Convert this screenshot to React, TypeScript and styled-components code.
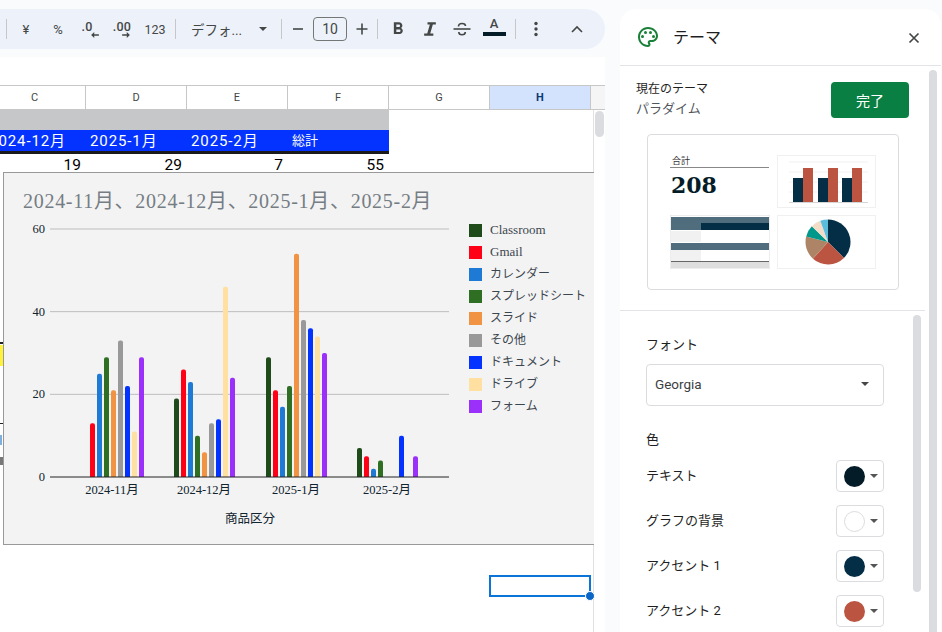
import React from "react";
import styled, { createGlobalStyle } from "styled-components";

const UI_FONT = `Roboto, "Noto Sans CJK JP", sans-serif`;
const CHART_FONT = `"Liberation Serif", "Noto Sans CJK JP", serif`;

const GlobalStyle = createGlobalStyle`
  html, body { margin: 0; padding: 0; background: #f9fbfd; overflow: hidden; }
  * { box-sizing: border-box; }
`;

const Page = styled.div`
  display: flex;
  width: 942px;
  height: 632px;
  padding-top: 9px;
  background: #f9fbfd;
  font-family: ${UI_FONT};
  overflow: hidden;
`;

const LeftSide = styled.div`
  display: flex;
  flex-direction: column;
  gap: 8px;
  width: 605px;
  flex: none;
`;

/* toolbar */
const Toolbar = styled.div`
  display: flex;
  align-items: center;
  height: 40px;
  padding-left: 6px;
  background: #edf2fa;
  border-radius: 0 20px 20px 0;
  color: #444746;
`;

const Sep = styled.div<{ $left?: number; $right?: number }>`
  width: 1px;
  height: 20px;
  flex: none;
  background: #c7c7c7;
  margin-left: ${(p) => p.$left ?? 0}px;
  margin-right: ${(p) => p.$right ?? 0}px;
`;

const ToolButton = styled.div<{ $w?: number; $size?: number }>`
  position: relative;
  display: flex;
  flex-direction: column;
  align-items: center;
  justify-content: center;
  flex: none;
  width: ${(p) => p.$w ?? 32}px;
  height: 32px;
  font-size: ${(p) => p.$size ?? 12}px;
  color: #444746;
`;

const DecimalText = styled.span<{ $nudge?: number }>`
  font-size: 12.5px;
  font-weight: 500;
  line-height: 11px;
  letter-spacing: 0.2px;
  margin-left: ${(p) => p.$nudge ?? 0}px;
`;

const Arrow = styled.svg<{ $nudge: number }>`
  display: block;
  margin-left: ${(p) => p.$nudge}px;
`;

const FontPicker = styled.div`
  display: flex;
  align-items: center;
  justify-content: space-between;
  flex: none;
  width: 100px;
  margin-left: 5px;
  padding: 0 14px 0 10px;
  font-size: 13.5px;
  color: #444746;
`;

const Caret = styled.div<{ $color?: string }>`
  width: 0;
  height: 0;
  flex: none;
  border-left: 4.5px solid transparent;
  border-right: 4.5px solid transparent;
  border-top: 4.5px solid ${(p) => p.$color ?? "#444746"};
`;

const SizeBox = styled.div`
  display: flex;
  align-items: center;
  justify-content: center;
  flex: none;
  width: 34px;
  height: 24px;
  margin: 0 3px;
  border: 1px solid #747775;
  border-radius: 4px;
  font-size: 14px;
  color: #444746;
`;

const ColorA = styled.span`
  font-size: 13px;
  font-weight: 500;
  line-height: 14px;
  margin-top: -5px;
`;

const ColorBar = styled.div`
  width: 23px;
  height: 4px;
  margin-top: 1px;
  background: #041c27;
`;

/* sheet */
const Sheet = styled.div`
  display: flex;
  flex-direction: column;
  flex: 1;
  min-height: 0;
  background: #fff;
`;

const FormulaGap = styled.div`
  height: 29px;
  flex: none;
  border-bottom: 1px solid #c7c7c7;
`;

const ColumnHeader = styled.div`
  display: grid;
  grid-template-columns: 86px repeat(5, 101px) 1fr;
  height: 24px;
  flex: none;
  border-bottom: 1px solid #c7c7c7;
`;

const ColumnCell = styled.div<{ $active?: boolean; $filler?: boolean; $cut?: number }>`
  display: flex;
  align-items: center;
  justify-content: center;
  padding-right: ${(p) => p.$cut ?? 0}px;
  font-size: 11px;
  font-weight: ${(p) => (p.$active ? 700 : 400)};
  color: ${(p) => (p.$active ? "#0b3a75" : "#444746")};
  background: ${(p) => (p.$active ? "#d3e3fd" : p.$filler ? "#f5f5f5" : "#fff")};
  border-right: 1px solid #c7c7c7;
  &:last-child { border-right: 0; }
`;

const SheetBody = styled.div`
  display: flex;
  flex: 1;
  min-height: 0;
`;

const Cells = styled.div`
  position: relative;
  width: 594px;
  flex: none;
  border-right: 1px solid #e1e1e1;
`;

const Row = styled.div<{ $bg?: string; $h: number }>`
  display: grid;
  grid-template-columns: 86px repeat(3, 101px);
  width: 389px;
  height: ${(p) => p.$h}px;
  background: ${(p) => p.$bg ?? "transparent"};
`;

const HeadRow = styled(Row)`
  border-bottom: 3px solid #1a1a1a;
  height: 24px;
  overflow: hidden;
`;

const HeadCell = styled.div<{ $clip?: boolean; $kanji?: boolean }>`
  display: flex;
  align-items: center;
  justify-content: ${(p) => (p.$clip ? "flex-end" : "flex-start")};
  padding: ${(p) => (p.$clip ? "0 20px 2px 0" : "0 0 2px 4px")};
  font-size: ${(p) => (p.$kanji ? 13 : 15)}px;
  letter-spacing: ${(p) => (p.$kanji ? 0 : 0.9)}px;
  color: #fff;
  white-space: nowrap;
  overflow: hidden;
`;

const NumCell = styled.div`
  display: flex;
  align-items: center;
  justify-content: flex-end;
  padding-right: 5px;
  font-size: 15.5px;
  color: #000;
`;

const Stub = styled.div<{ $y: number; $h: number; $c: string; $w?: number }>`
  position: absolute;
  left: 0;
  top: ${(p) => p.$y}px;
  width: ${(p) => p.$w ?? 3}px;
  height: ${(p) => p.$h}px;
  background: ${(p) => p.$c};
`;

const ChartFrame = styled.div`
  position: absolute;
  left: 3px;
  top: 62px;
  width: 591px;
  height: 373px;
  background: #f3f3f3;
  border: 1px solid #999;
  border-right: 0;
`;

const ChartSvg = styled.svg`
  display: block;
  position: absolute;
  left: -1px;
  top: -1px;
`;

const ChartTitle = styled.text`
  font-family: ${CHART_FONT};
  font-size: 20px;
  letter-spacing: 0.71px;
  fill: #757d84;
`;

const TickLabel = styled.text<{ $anchor?: string }>`
  font-family: ${CHART_FONT};
  font-size: 12.5px;
  fill: #10232e;
  text-anchor: ${(p) => p.$anchor ?? "middle"};
`;

const LegendLabel = styled.text<{ $cjk: boolean }>`
  font-family: ${CHART_FONT};
  font-size: ${(p) => (p.$cjk ? 12 : 13)}px;
  fill: #3b464e;
`;

const Selection = styled.div`
  position: absolute;
  left: 489px;
  top: 465px;
  width: 102px;
  height: 22px;
  border: 2px solid #0b74d8;
  &::after {
    content: "";
    position: absolute;
    right: -6px;
    bottom: -6px;
    width: 8px;
    height: 8px;
    border-radius: 50%;
    background: #0b66c8;
    border: 1px solid #fff;
    box-sizing: content-box;
  }
`;

const Rail = styled.div`
  flex: 1;
  padding: 1px 1px 0 1px;
`;

const RailThumb = styled.div`
  width: 9px;
  height: 26px;
  border-radius: 5px;
  background: #dadce0;
`;

/* side panel */
const Panel = styled.div`
  display: flex;
  flex-direction: column;
  width: 321px;
  margin-left: 15px;
  flex: none;
  background: #fff;
  border-radius: 16px 16px 0 0;
`;

const PanelHeader = styled.div`
  display: flex;
  align-items: center;
  height: 57px;
  flex: none;
  padding: 0 20px 0 16px;
  border-bottom: 1px solid #e1e3e6;
`;

const PanelTitle = styled.div`
  flex: 1;
  margin: -2px 0 0 13px;
  font-size: 16px;
  color: #1f1f1f;
`;

const PanelClose = styled.div`
  display: flex;
  margin-top: 2px;
`;

const PanelBody = styled.div`
  display: flex;
  flex: 1;
  min-height: 0;
`;

const PanelMain = styled.div`
  width: 305px;
  flex: none;
`;

const OuterTrack = styled.div`
  width: 8px;
  margin: 4px 0 0 4px;
  background: #dadce0;
  border-radius: 4px 4px 0 0;
`;

const ThemeSection = styled.div`
  height: 245px;
  padding: 16px 16px 0;
  border-bottom: 1px solid #e1e3e6;
`;

const ThemeTop = styled.div`
  display: flex;
  justify-content: space-between;
  height: 36px;
`;

const ThemeNames = styled.div`
  font-size: 12px;
  line-height: 19px;
  color: #1f1f1f;
  margin-top: -2px;
`;

const ThemeName = styled.div`
  font-size: 13px;
  color: #50565c;
`;

const DoneButton = styled.div`
  display: flex;
  align-items: center;
  justify-content: center;
  width: 78px;
  height: 36px;
  background: #0a7f43;
  border-radius: 4px;
  color: #fff;
  font-size: 14px;
`;

const PreviewCard = styled.div`
  display: grid;
  grid-template-columns: 99px 99px;
  grid-template-rows: 53px 54px;
  gap: 7px 8px;
  width: 252px;
  height: 156px;
  margin: 16px 0 0 11px;
  padding: 20px 0 0 22px;
  border: 1px solid #dadce0;
  border-radius: 4px;
`;

const ScoreCard = styled.div`
  display: flex;
  flex-direction: column;
`;

const ScoreLabel = styled.div`
  height: 13px;
  padding-left: 2px;
  font-size: 9px;
  line-height: 12px;
  color: #333;
  border-bottom: 1px solid #888;
`;

const ScoreValue = styled.div`
  margin-top: 4px;
  padding-left: 1px;
  font-family: "DejaVu Serif", serif;
  font-weight: 700;
  font-size: 22px;
  line-height: 26px;
  color: #041c27;
`;

const Thumb = styled.svg`
  display: block;
`;

const FormSection = styled.div`
  display: flex;
`;

const FormColumn = styled.div`
  width: 264px;
  flex: none;
  padding: 24px 0 0 26px;
`;

const FormLabel = styled.div<{ $top?: number }>`
  font-size: 13px;
  line-height: 20px;
  color: #1f1f1f;
  margin-top: ${(p) => p.$top ?? 0}px;
`;

const Select = styled.div`
  display: flex;
  align-items: center;
  justify-content: space-between;
  height: 42px;
  margin-top: 9px;
  padding: 0 14px 2px 8px;
  border: 1px solid #dadce0;
  border-radius: 4px;
  font-size: 13.5px;
  color: #3c4043;
`;

const ColorRows = styled.div`
  display: flex;
  flex-direction: column;
  gap: 13px;
  margin-top: 10px;
`;

const ColorRow = styled.div`
  display: flex;
  align-items: center;
  justify-content: space-between;
  height: 32px;
  font-size: 13px;
  color: #1f1f1f;
`;

const ColorName = styled.span`
  margin-top: -4px;
`;

const SwatchButton = styled.div`
  display: flex;
  align-items: center;
  justify-content: space-between;
  width: 48px;
  height: 32px;
  padding: 0 5px 0 7px;
  border: 1px solid #dadce0;
  border-radius: 4px;
`;

const SwatchDot = styled.div<{ $c: string; $ring?: boolean }>`
  width: 21px;
  height: 21px;
  border-radius: 50%;
  background: ${(p) => p.$c};
  border: ${(p) => (p.$ring ? "1px solid #dadce0" : "0")};
`;

const InnerThumb = styled.div`
  width: 8px;
  height: 277px;
  margin: 4px 0 0 29px;
  border-radius: 4px;
  background: #dadce0;
`;

const SERIES = [
  { name: "Classroom", color: "#1f4a1a", values: [0, 19, 29, 7] },
  { name: "Gmail", color: "#ff0016", values: [13, 26, 21, 5] },
  { name: "カレンダー", color: "#1f7ad6", values: [25, 23, 17, 2] },
  { name: "スプレッドシート", color: "#2f6f24", values: [29, 10, 22, 4] },
  { name: "スライド", color: "#f09343", values: [21, 6, 54, 0] },
  { name: "その他", color: "#999999", values: [33, 13, 38, 0] },
  { name: "ドキュメント", color: "#0433ff", values: [22, 14, 36, 10] },
  { name: "ドライブ", color: "#ffe0a0", values: [11, 46, 34, 0] },
  { name: "フォーム", color: "#9b30fa", values: [29, 24, 30, 5] },
];

const GROUP_X = [83, 174, 266, 357];
const MONTHS = [
  { label: "2024-11月", x: 112 },
  { label: "2024-12月", x: 204 },
  { label: "2025-1月", x: 296 },
  { label: "2025-2月", x: 387 },
];
const BASE_Y = 477;
const UNIT = 248 / 60;

const barPath = (x: number, value: number) => {
  const top = BASE_Y - value * UNIT;
  return `M${x} ${BASE_Y}V${top + 2}Q${x} ${top} ${x + 2} ${top}H${x + 3}Q${x + 5} ${top} ${x + 5} ${top + 2}V${BASE_Y}Z`;
};

function SalesChart() {
  return (
    <ChartSvg width="591" height="373" viewBox="3 172 591 373">
      <ChartTitle x="23" y="208">2024-11月、2024-12月、2025-1月、2025-2月</ChartTitle>
      {[60, 40, 20].map((v) => (
        <line key={v} x1="50" x2="449" y1={BASE_Y - v * UNIT} y2={BASE_Y - v * UNIT} stroke="#bdbdbd" />
      ))}
      {[0, 20, 40, 60].map((v) => (
        <TickLabel key={v} $anchor="end" x="45" y={BASE_Y - v * UNIT + 4}>{v}</TickLabel>
      ))}
      {SERIES.map((s, i) =>
        s.values.map((v, g) =>
          v > 0 ? <path key={`${i}-${g}`} d={barPath(GROUP_X[g] + i * 7, v)} fill={s.color} /> : null
        )
      )}
      <line x1="50" x2="449" y1={BASE_Y} y2={BASE_Y} stroke="#222" />
      {MONTHS.map((m) => (
        <TickLabel key={m.label} x={m.x} y="494">{m.label}</TickLabel>
      ))}
      <TickLabel x="250" y="523">商品区分</TickLabel>
      {SERIES.map((s, i) => (
        <g key={s.name}>
          <rect x="469" y={224 + i * 22} width="13" height="13" fill={s.color} />
          <LegendLabel $cjk={i > 1} x="490" y={234 + i * 22}>{s.name}</LegendLabel>
        </g>
      ))}
    </ChartSvg>
  );
}

function MiniBars() {
  return (
    <Thumb width="99" height="53" viewBox="0 0 99 53">
      <rect x="0.5" y="0.5" width="98" height="52" fill="#fff" stroke="#f0f0f0" />
      {[7, 17, 27, 37].map((y) => (
        <line key={y} x1="12" x2="91" y1={y} y2={y} stroke="#f1f1f1" />
      ))}
      {[16, 41, 65].map((x) => (
        <g key={x}>
          <rect x={x} y="23" width="10" height="24" fill="#042d46" />
          <rect x={x + 10} y="13" width="10" height="34" fill="#bc5442" />
        </g>
      ))}
      <line x1="12" x2="91" y1="47.5" y2="47.5" stroke="#d5d5d5" />
    </Thumb>
  );
}

function MiniTable() {
  return (
    <Thumb width="100" height="54" viewBox="0 0 100 54">
      <rect width="100" height="54" fill="#fff" />
      <rect width="100" height="54" fill="none" stroke="#dcdcdc" />
      <rect x="1" y="2" width="98" height="6" fill="#4f6d7d" />
      <rect x="1" y="8" width="30" height="7" fill="#4f6d7d" />
      <rect x="31" y="8" width="68" height="7" fill="#042d46" />
      <rect x="1" y="16" width="30" height="11" fill="#f1f1f1" />
      <rect x="1" y="28" width="98" height="7" fill="#4f6d7d" />
      <rect x="1" y="35" width="30" height="11" fill="#f1f1f1" />
      <rect x="1" y="46" width="98" height="1" fill="#666" />
      <rect x="1" y="47" width="98" height="6" fill="#dedede" />
    </Thumb>
  );
}

const PIE = [
  { from: 0, to: 135, color: "#042d46" },
  { from: 135, to: 222, color: "#bc5442" },
  { from: 222, to: 284, color: "#ad8566" },
  { from: 284, to: 314, color: "#00988a" },
  { from: 314, to: 340, color: "#f3dcc8" },
  { from: 340, to: 360, color: "#5bbcdc" },
];

const slicePath = (cx: number, cy: number, r: number, from: number, to: number) => {
  const pt = (a: number) => {
    const rad = ((a - 90) * Math.PI) / 180;
    return `${cx + r * Math.cos(rad)} ${cy + r * Math.sin(rad)}`;
  };
  return `M${cx} ${cy}L${pt(from)}A${r} ${r} 0 ${to - from > 180 ? 1 : 0} 1 ${pt(to)}Z`;
};

function MiniPie() {
  return (
    <Thumb width="99" height="54" viewBox="0 0 99 54">
      <rect x="0.5" y="0.5" width="98" height="53" fill="#fff" stroke="#f0f0f0" />
      {PIE.map((s) => (
        <path key={s.from} d={slicePath(51, 27, 22.5, s.from, s.to)} fill={s.color} />
      ))}
    </Thumb>
  );
}

const PaletteIcon = () => (
  <svg width="24" height="24" viewBox="0 0 24 24" fill="#188038">
    <path d="M12 22C6.49 22 2 17.51 2 12S6.49 2 12 2s10 4.04 10 9c0 3.31-2.69 6-6 6h-1.77c-.28 0-.5.22-.5.5 0 .12.05.23.13.33.41.47.64 1.06.64 1.67 0 1.38-1.12 2.5-2.5 2.5zm0-18c-4.41 0-8 3.59-8 8s3.59 8 8 8c.28 0 .5-.22.5-.5a.54.54 0 0 0-.14-.35c-.41-.46-.63-1.05-.63-1.65 0-1.38 1.12-2.5 2.5-2.5H16c2.21 0 4-1.79 4-4 0-3.86-3.59-7-8-7z" />
    <circle cx="6.5" cy="11.5" r="1.5" />
    <circle cx="9.5" cy="7.5" r="1.5" />
    <circle cx="14.5" cy="7.5" r="1.5" />
    <circle cx="17.5" cy="11.5" r="1.5" />
  </svg>
);

const CloseIcon = () => (
  <svg width="14" height="14" viewBox="0 0 14 14" stroke="#444746" strokeWidth="1.7" fill="none">
    <path d="M2.5 2.5l9 9M11.5 2.5l-9 9" />
  </svg>
);

const ArrowIcon = ({ left, nudge }: { left?: boolean; nudge: number }) => (
  <Arrow $nudge={nudge} width="8" height="6" viewBox="0 0 9 7" fill="#444746">
    {left ? <path d="M3.6 0L0 3.5 3.6 7V4.5H9v-2H3.6z" /> : <path d="M5.4 0L9 3.5 5.4 7V4.5H0v-2h5.4z" />}
  </Arrow>
);

const BoldIcon = () => (
  <svg width="20" height="20" viewBox="0 0 24 24" fill="#444746">
    <path d="M15.6 10.79c.97-.67 1.65-1.77 1.65-2.79 0-2.26-1.75-4-4-4H7v14h7.04c2.09 0 3.71-1.7 3.71-3.79 0-1.52-.86-2.82-2.15-3.42zM10 6.5h3c.83 0 1.5.67 1.5 1.5s-.67 1.5-1.5 1.5h-3v-3zm3.5 9H10v-3h3.5c.83 0 1.5.67 1.5 1.5s-.67 1.5-1.5 1.5z" />
  </svg>
);

const ItalicIcon = () => (
  <svg width="20" height="20" viewBox="0 0 24 24" fill="#444746">
    <path d="M9 4h10v2.5h-3.6L12.3 17.5H16V20H5v-2.500h3.700L11.800 6.500H9z" />
  </svg>
);

const StrikeIcon = () => (
  <svg width="20" height="20" viewBox="0 0 20 20" fill="none" stroke="#444746" strokeWidth="1.6">
    <path d="M1.500 10h17" />
    <path d="M6.500 7.500C6.500 5.500 8 4.500 10 4.500s3.500 1 3.500 2.600" />
    <path d="M6.800 13c0 1.700 1.400 2.700 3.200 2.700s3.300-1 3.300-2.700" />
  </svg>
);

const DotsIcon = () => (
  <svg width="20" height="20" viewBox="0 0 20 20" fill="#444746">
    <circle cx="10" cy="4.500" r="1.700" />
    <circle cx="10" cy="10" r="1.700" />
    <circle cx="10" cy="15.500" r="1.700" />
  </svg>
);

const ChevronUp = () => (
  <svg width="16" height="16" viewBox="0 0 16 16" fill="none" stroke="#444746" strokeWidth="1.600">
    <path d="M3 11l5-5 5 5" />
  </svg>
);

const MinusIcon = () => (
  <svg width="14" height="14" viewBox="0 0 14 14" stroke="#444746" strokeWidth="1.600">
    <path d="M2 7h10" />
  </svg>
);

const PlusIcon = () => (
  <svg width="14" height="14" viewBox="0 0 14 14" stroke="#444746" strokeWidth="1.600">
    <path d="M1.500 7h11M7 1.500v11" />
  </svg>
);

const COLUMNS = ["C", "D", "E", "F", "G", "H"];

const THEME_COLORS = [
  { label: "テキスト", color: "#041c27" },
  { label: "グラフの背景", color: "#ffffff", ring: true },
  { label: "アクセント 1", color: "#042d46" },
  { label: "アクセント 2", color: "#bc5442" },
];

export default function App() {
  return (
    <Page>
      <GlobalStyle />
      <LeftSide>
        <Toolbar>
          <Sep $right={3} />
          <ToolButton $size={13}>¥</ToolButton>
          <ToolButton $size={13}>%</ToolButton>
          <ToolButton>
            <DecimalText $nudge={-6}>.0</DecimalText>
            <ArrowIcon left nudge={9} />
          </ToolButton>
          <ToolButton>
            <DecimalText>.00</DecimalText>
            <ArrowIcon nudge={8} />
          </ToolButton>
          <ToolButton $w={34} $size={12.5}>123</ToolButton>
          <Sep $left={3} />
          <FontPicker>
            デフォ...
            <Caret />
          </FontPicker>
          <Sep $left={0} $right={4} />
          <ToolButton $w={24}><MinusIcon /></ToolButton>
          <SizeBox>10</SizeBox>
          <ToolButton $w={24}><PlusIcon /></ToolButton>
          <Sep $left={3} $right={4} />
          <ToolButton><BoldIcon /></ToolButton>
          <ToolButton><ItalicIcon /></ToolButton>
          <ToolButton><StrikeIcon /></ToolButton>
          <ToolButton>
            <ColorA>A</ColorA>
            <ColorBar />
          </ToolButton>
          <Sep $left={5} $right={4} />
          <ToolButton><DotsIcon /></ToolButton>
          <ToolButton $w={9} />
          <ToolButton><ChevronUp /></ToolButton>
        </Toolbar>
        <Sheet>
          <FormulaGap />
          <ColumnHeader>
            {COLUMNS.map((c) => (
              <ColumnCell key={c} $active={c === "H"} $cut={c === "C" ? 16 : 0}>{c}</ColumnCell>
            ))}
            <ColumnCell $filler />
          </ColumnHeader>
          <SheetBody>
            <Cells>
              <Row $bg="#c6c7c8" $h={20} />
              <HeadRow $bg="#0433ff" $h={24}>
                <HeadCell $clip>2024-12月</HeadCell>
                <HeadCell>2025-1月</HeadCell>
                <HeadCell>2025-2月</HeadCell>
                <HeadCell $kanji>総計</HeadCell>
              </HeadRow>
              <Row $h={21}>
                <NumCell>19</NumCell>
                <NumCell>29</NumCell>
                <NumCell>7</NumCell>
                <NumCell>55</NumCell>
              </Row>
              <Stub $y={232} $h={2} $c="#222" />
              <Stub $y={235} $h={21} $c="#fff23a" />
              <Stub $y={313} $h={1} $c="#222" />
              <Stub $y={325} $h={10} $c="#7fb0e0" $w={2} />
              <Stub $y={347} $h={8} $c="#777" />
              <ChartFrame>
                <SalesChart />
              </ChartFrame>
              <Selection />
            </Cells>
            <Rail>
              <RailThumb />
            </Rail>
          </SheetBody>
        </Sheet>
      </LeftSide>
      <Panel>
        <PanelHeader>
          <PaletteIcon />
          <PanelTitle>テーマ</PanelTitle>
          <PanelClose><CloseIcon /></PanelClose>
        </PanelHeader>
        <PanelBody>
          <PanelMain>
            <ThemeSection>
              <ThemeTop>
                <ThemeNames>
                  現在のテーマ
                  <ThemeName>パラダイム</ThemeName>
                </ThemeNames>
                <DoneButton>完了</DoneButton>
              </ThemeTop>
              <PreviewCard>
                <ScoreCard>
                  <ScoreLabel>合計</ScoreLabel>
                  <ScoreValue>208</ScoreValue>
                </ScoreCard>
                <MiniBars />
                <MiniTable />
                <MiniPie />
              </PreviewCard>
            </ThemeSection>
            <FormSection>
              <FormColumn>
                <FormLabel>フォント</FormLabel>
                <Select>
                  Georgia
                  <Caret />
                </Select>
                <FormLabel $top={24}>色</FormLabel>
                <ColorRows>
                  {THEME_COLORS.map((c) => (
                    <ColorRow key={c.label}>
                      <ColorName>{c.label}</ColorName>
                      <SwatchButton>
                        <SwatchDot $c={c.color} $ring={c.ring} />
                        <Caret $color="#555" />
                      </SwatchButton>
                    </ColorRow>
                  ))}
                </ColorRows>
              </FormColumn>
              <InnerThumb />
            </FormSection>
          </PanelMain>
          <OuterTrack />
        </PanelBody>
      </Panel>
    </Page>
  );
}
